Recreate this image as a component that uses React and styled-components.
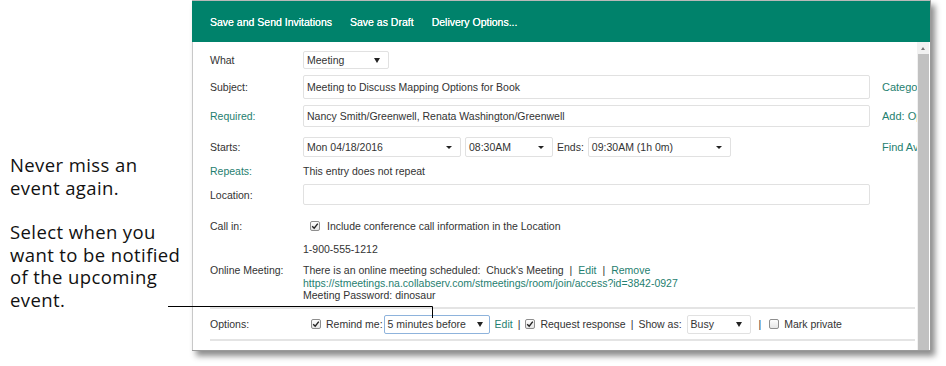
import styled, { createGlobalStyle } from 'styled-components';

const Global = createGlobalStyle`
  html, body { margin: 0; padding: 0; background: #fff; }
  body { width: 946px; height: 366px; overflow: hidden; }
`;

const Page = styled.div`
  position: relative;
  display: flex;
  align-items: flex-start;
  width: 946px;
  height: 366px;
`;

const Note = styled.div`
  width: 182px;
  padding: 154px 0 0 10px;
  font-family: "Open Sans", Lato, sans-serif;
  font-size: 18.5px;
  line-height: 22.5px;
  letter-spacing: 0.4px;
  color: #111;
`;

const NoteP = styled.p`
  margin: 0 0 ${p => p.$after || 0}px;
`;

const Callout = styled.svg`
  position: absolute;
  left: 0;
  top: 0;
  pointer-events: none;
`;

const Panel = styled.div`
  width: 738px;
  border-top: 1px solid #b9b9b9;
  border-right: 1px solid #9a9a9a;
  border-bottom: 1px solid #9a9a9a;
  box-shadow: 4px 5px 6px rgba(0, 0, 0, 0.45);
  font-family: "Liberation Sans", Arial, sans-serif;
  font-size: 10.5px;
  color: #333;
`;

const Header = styled.div`
  display: flex;
  align-items: center;
  gap: 18px;
  height: 41px;
  padding-left: 18px;
  background: #00826b;
  color: #fff;
  font-size: 10.5px;
  text-shadow: 0 0 0.4px #fff;
`;

const Body = styled.div`
  display: flex;
  height: 308px;
  border-left: 1px solid #c8c8c8;
`;

const Form = styled.div`
  flex: 1;
  min-width: 0;
  padding-left: 17px;
`;

const Row = styled.div`
  display: flex;
  align-items: ${p => p.$align || 'center'};
  height: ${p => p.$h}px;
  margin-top: ${p => p.$top}px;
`;

const Label = styled.div`
  width: 93px;
  flex: none;
  color: ${p => (p.$link ? '#1f8070' : '#333')};
`;

const Field = styled.div`
  width: 567px;
  flex: none;
  display: flex;
  align-items: center;
  gap: ${p => p.$gap || 0}px;
  height: 100%;
`;

const Side = styled.div`
  flex: 1;
  min-width: 0;
  margin-left: 12px;
  overflow: hidden;
  white-space: nowrap;
  color: #1f8070;
  font-size: 11px;
`;

const Input = styled.div`
  box-sizing: border-box;
  width: 100%;
  height: 100%;
  display: flex;
  align-items: center;
  padding-left: 3px;
  border: 1px solid #e1e1e1;
  border-radius: 2px;
  background: #fff;
`;

const Select = styled.div`
  box-sizing: border-box;
  width: ${p => p.$w}px;
  height: ${p => p.$hh || 20}px;
  flex: none;
  display: flex;
  align-items: center;
  justify-content: space-between;
  padding: 0 ${p => p.$pr || 8}px 0 3px;
  border: 1px solid ${p => (p.$focus ? '#8eb3dc' : '#e1e1e1')};
  border-radius: 2px;
  background: #fff;
`;

const Arrow = styled.span`
  width: 0;
  height: 0;
  border-left: 3px solid transparent;
  border-right: 3px solid transparent;
  border-top: ${p => (p.$big ? 5 : 3)}px solid #222;
`;

const Check = styled.span`
  box-sizing: border-box;
  display: inline-flex;
  align-items: center;
  justify-content: center;
  width: 10px;
  height: 10px;
  flex: none;
  border: 1px solid #8e8e8e;
  border-radius: 2px;
  background: linear-gradient(#fdfdfd, #e6e6e6);
`;

const Text = styled.span`
  white-space: nowrap;
  color: ${p => (p.$link ? '#1f8070' : 'inherit')};
  margin-right: ${p => p.$mr || 0}px;
`;

const Lines = styled.div`
  display: flex;
  flex-direction: column;
  padding-top: 1px;
  line-height: 12.5px;
`;

const InlineRow = styled.div`
  display: flex;
  align-items: center;
  gap: ${p => p.$gap || 5}px;
  padding-left: ${p => p.$pl || 0}px;
  white-space: nowrap;
`;

const Rule = styled.div`
  height: 2px;
  margin-top: ${p => p.$top}px;
  margin-right: 2px;
  background: #e4e4e4;
`;

const Scrollbar = styled.div`
  width: 12px;
  flex: none;
  display: flex;
  flex-direction: column;
  align-items: center;
  background: #f1f1f1;
  border-right: 1px solid #fff;
`;

const UpArrow = styled.span`
  margin: 5px 0 4px;
  width: 0;
  height: 0;
  border-left: 2.5px solid transparent;
  border-right: 2.5px solid transparent;
  border-bottom: 3px solid #777;
`;

const Thumb = styled.div`
  flex: 1;
  width: 11px;
  background: #c1c1c1;
`;

const Tick = () => (
  <svg width="8" height="8" viewBox="0 0 8 8">
    <path d="M1.2 4.2 L3.2 6.2 L6.8 1.6" fill="none" stroke="#222" strokeWidth="1.4" />
  </svg>
);

const Box = ({ on }) => <Check>{on && <Tick />}</Check>;

export default function App() {
  return (
    <Page>
      <Global />
      <Note>
        <NoteP $after={22}>Never miss an<br />event again.</NoteP>
        <NoteP>Select when you<br />want to be notified<br />of the upcoming<br />event.</NoteP>
      </Note>

      <Panel>
        <Header>
          <span>Save and Send Invitations</span>
          <span>Save as Draft</span>
          <span>Delivery Options...</span>
        </Header>
        <Body>
          <Form>
            <Row $h={18} $top={9}>
              <Label>What</Label>
              <Field>
                <Select $w={86} $hh={18}>Meeting<Arrow $big /></Select>
              </Field>
            </Row>
            <Row $h={24} $top={6}>
              <Label>Subject:</Label>
              <Field><Input>Meeting to Discuss Mapping Options for Book</Input></Field>
              <Side>Categories</Side>
            </Row>
            <Row $h={22} $top={6}>
              <Label $link>Required:</Label>
              <Field><Input>Nancy Smith/Greenwell, Renata Washington/Greenwell</Input></Field>
              <Side><Text>Add: </Text>Optional</Side>
            </Row>
            <Row $h={20} $top={10}>
              <Label>Starts:</Label>
              <Field $gap={4}>
                <Select $w={158}>Mon 04/18/2016<Arrow /></Select>
                <Select $w={88}>08:30AM<Arrow /></Select>
                <Text>Ends:</Text>
                <Select $w={143}>09:30AM (1h 0m)<Arrow /></Select>
              </Field>
              <Side>Find Availability</Side>
            </Row>
            <Row $h={18} $top={5}>
              <Label $link>Repeats:</Label>
              <Field>This entry does not repeat</Field>
            </Row>
            <Row $h={21} $top={4}>
              <Label>Location:</Label>
              <Field><Input /></Field>
            </Row>
            <Row $h={20} $top={11}>
              <Label>Call in:</Label>
              <Field>
                <InlineRow $gap={7} $pl={7}>
                  <Box on />
                  <Text>Include conference call information in the Location</Text>
                </InlineRow>
              </Field>
            </Row>
            <Row $h={16} $top={5}>
              <Label />
              <Field>1-900-555-1212</Field>
            </Row>
            <Row $h={38} $top={6} $align="flex-start">
              <Label style={{ paddingTop: 1 }}>Online Meeting:</Label>
              <Lines>
                <InlineRow $gap={6}>
                  <Text>There is an online meeting scheduled:&nbsp; Chuck's Meeting</Text>
                  <Text>|</Text>
                  <Text $link>Edit</Text>
                  <Text>|</Text>
                  <Text $link>Remove</Text>
                </InlineRow>
                <Text $link>https://stmeetings.na.collabserv.com/stmeetings/room/join/access?id=3842-0927</Text>
                <Text>Meeting Password: dinosaur</Text>
              </Lines>
            </Row>
            <Rule $top={6} />
            <Row $h={18} $top={6}>
              <Label>Options:</Label>
              <InlineRow $gap={5} $pl={8}>
                <Box on />
                <Text $mr={-4}>Remind me:</Text>
                <Select $w={106} $hh={19} $focus $pr={6}>5 minutes before<Arrow $big /></Select>
                <Text $link>Edit</Text>
                <Text>|</Text>
                <Box on />
                <Text>Request response</Text>
                <Text>|</Text>
                <Text>Show as:</Text>
                <Select $w={64} $hh={19}>Busy<Arrow $big /></Select>
                <Text>&nbsp;|&nbsp;</Text>
                <Box />
                <Text>Mark private</Text>
              </InlineRow>
            </Row>
            <Rule $top={6} />
          </Form>
          <Scrollbar>
            <UpArrow />
            <Thumb />
          </Scrollbar>
        </Body>
      </Panel>

      <Callout width="946" height="366">
        <path d="M168 306.5 H432.5 V318" fill="none" stroke="#000" strokeWidth="1" />
      </Callout>
    </Page>
  );
}
